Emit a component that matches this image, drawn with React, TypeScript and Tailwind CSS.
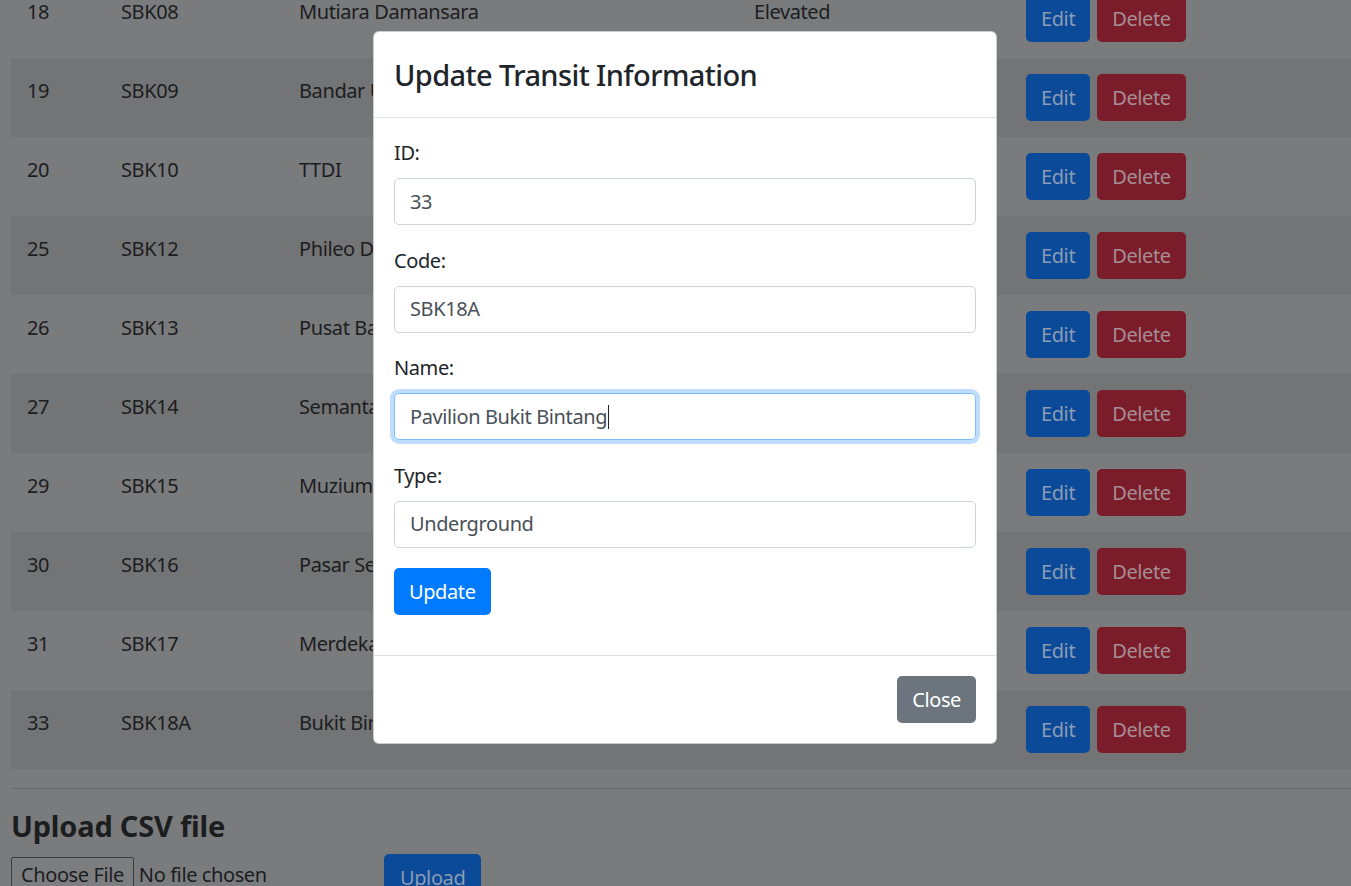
import React from 'react'

type Row = { id: number; code: string; name: string; type: string }

const ROWS: Row[] = [
  { id: 18, code: 'SBK08', name: 'Mutiara Damansara', type: 'Elevated' },
  { id: 19, code: 'SBK09', name: 'Bandar Utama', type: 'Elevated' },
  { id: 20, code: 'SBK10', name: 'TTDI', type: 'Elevated' },
  { id: 25, code: 'SBK12', name: 'Phileo Damansara', type: 'Elevated' },
  { id: 26, code: 'SBK13', name: 'Pusat Bandar Damansara', type: 'Elevated' },
  { id: 27, code: 'SBK14', name: 'Semantan', type: 'Elevated' },
  { id: 29, code: 'SBK15', name: 'Muzium Negara', type: 'Underground' },
  { id: 30, code: 'SBK16', name: 'Pasar Seni', type: 'Underground' },
  { id: 31, code: 'SBK17', name: 'Merdeka', type: 'Underground' },
  { id: 33, code: 'SBK18A', name: 'Bukit Bintang', type: 'Underground' },
]

const font = { fontFamily: '"Noto Sans", "Segoe UI", sans-serif' }

function Field({ label, value, focused }: { label: string; value: string; focused?: boolean }) {
  return (
    <div className="mb-[20.5px]">
      <div className="text-[20px] leading-[30px] tracking-[-0.4px] text-[#212529] mb-[10px]">{label}</div>
      <div
        className={
          'h-[47px] rounded-[5px] border px-[15px] flex items-center text-[20px] tracking-[-0.4px] text-[#495057] ' +
          (focused ? 'border-[#80bdff] shadow-[0_0_0_4px_rgba(0,123,255,0.25)]' : 'border-[#ced4da]')
        }
      >
        <span>{value}</span>
        {focused && <span className="w-px h-[24px] bg-[#212529] ml-px" />}
      </div>
    </div>
  )
}

export default function App() {
  return (
    <div className="relative w-[1351px] h-[886px] overflow-hidden bg-[#7a7b7d]" style={font}>
      {/* page behind the backdrop */}
      <div className="pl-[11px] -mt-[21px]">
        <table className="table-fixed w-[1340px] border-collapse text-[20px] leading-[30px] tracking-[-0.4px] text-[#1c1d1f]">
          <colgroup>
            <col className="w-[94px]" />
            <col className="w-[178px]" />
            <col className="w-[455px]" />
            <col className="w-[272px]" />
            <col />
          </colgroup>
          <tbody>
            {ROWS.map((r, i) => (
              <tr key={r.id} className={i % 2 === 1 ? 'bg-[#737476]' : ''}>
                <td className="px-4 pt-[18px] pb-[14px] align-top whitespace-nowrap overflow-hidden">{r.id}</td>
                <td className="px-4 pt-[18px] pb-[14px] align-top whitespace-nowrap overflow-hidden">{r.code}</td>
                <td className="px-4 pt-[18px] pb-[14px] align-top whitespace-nowrap overflow-hidden">{r.name}</td>
                <td className="px-4 pt-[18px] pb-[14px] align-top whitespace-nowrap overflow-hidden">{r.type}</td>
                <td className="p-4 align-top">
                  <div className="flex gap-[7px]">
                    <span className="h-[47px] px-[15px] flex items-center rounded-[5px] bg-[#0a4a98] text-[#8b9cb4]">Edit</span>
                    <span className="h-[47px] px-[15px] flex items-center rounded-[5px] bg-[#7a1c2a] text-[#a68d93]">Delete</span>
                  </div>
                </td>
              </tr>
            ))}
          </tbody>
        </table>
        <div className="mt-[19px] border-t border-[#6a6b6d]" />
        <h3 className="mt-[19px] text-[29px] leading-[36px] font-bold tracking-[-0.2px] text-[#1c1d1f]">Upload CSV file</h3>
        <div className="mt-[10px] flex items-start text-[20px] tracking-[-0.4px] text-[#1c1d1f]">
          <div className="w-[373px] flex items-center mt-[3px]">
            <span className="h-[36px] px-[9px] flex items-center border border-[#3b3c3e] rounded-[2px] bg-[#7c7d7f]">Choose File</span>
            <span className="ml-[5px]">No file chosen</span>
          </div>
          <span className="h-[47px] px-4 flex items-center rounded-[5px] bg-[#0a4a98] text-[#8b9cb4]">Upload</span>
        </div>
      </div>

      {/* modal */}
      <div className="absolute left-[373px] top-[31px] w-[624px] bg-white rounded-[6px] border border-black/20 text-[#212529]">
        <div className="p-5 border-b border-[#dee2e6]">
          <h5 className="text-[29px] leading-[45px] font-medium tracking-[-0.6px]">Update Transit Information</h5>
        </div>
        <div className="p-5">
          <Field label="ID:" value="33" />
          <Field label="Code:" value="SBK18A" />
          <Field label="Name:" value="Pavilion Bukit Bintang" focused />
          <Field label="Type:" value="Underground" />
          <button className="h-[47px] px-[15px] rounded-[5px] bg-[#007bff] text-white text-[20px] tracking-[-0.4px] mb-5">Update</button>
        </div>
        <div className="border-t border-[#dee2e6] p-5 flex justify-end">
          <button className="h-[47px] px-[15px] rounded-[5px] bg-[#6c757d] text-white text-[20px] tracking-[-0.4px]">Close</button>
        </div>
      </div>
    </div>
  )
}
